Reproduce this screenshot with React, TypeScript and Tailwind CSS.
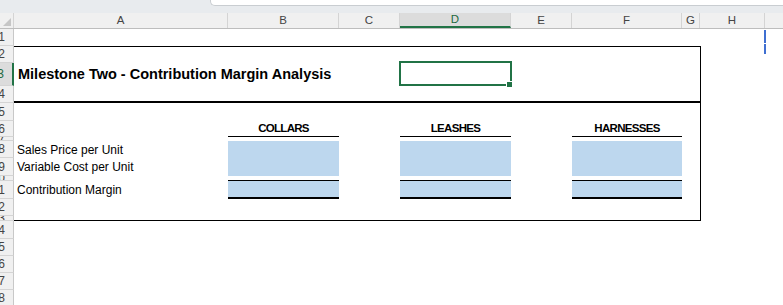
import React from 'react';

const COLS = [
  { key: 'A', cls: 'w-[214px]' },
  { key: 'B', cls: 'w-[111px]' },
  { key: 'C', cls: 'w-[61px]' },
  { key: 'D', cls: 'w-[111px]', active: true },
  { key: 'E', cls: 'w-[61px]' },
  { key: 'F', cls: 'w-[110px]' },
  { key: 'G', cls: 'w-[18px]' },
  { key: 'H', cls: 'w-[65px]' },
];

const ROWS = [
  { n: 1, h: 'h-[17px]' },
  { n: 2, h: 'h-[17px]' },
  { n: 3, h: 'h-[23px]', active: true },
  { n: 4, h: 'h-[17px]' },
  { n: 5, h: 'h-[18px]' },
  { n: 6, h: 'h-[16px]' },
  { n: 7, h: 'h-[4px]' },
  { n: 8, h: 'h-[17px]' },
  { n: 9, h: 'h-[18px]' },
  { n: 10, h: 'h-[5px]' },
  { n: 11, h: 'h-[18px]' },
  { n: 12, h: 'h-[17px]' },
  { n: 13, h: 'h-[5px]' },
  { n: 14, h: 'h-[18px]' },
  { n: 15, h: 'h-[17px]' },
  { n: 16, h: 'h-[17px]' },
  { n: 17, h: 'h-[17px]' },
  { n: 18, h: 'h-[17px]' },
];

const PRODUCTS = ['COLLARS', 'LEASHES', 'HARNESSES'];

const ProductColumn = ({ name, cls }: { name: string; cls: string }) => (
  <div className={`${cls} flex flex-col`}>
    <div className="h-[18px]" />
    <div className="h-[16px] border-b border-black flex items-center justify-center text-[11.5px] font-bold tracking-[-0.7px] text-black leading-none">
      {name}
    </div>
    <div className="h-[4px]" />
    <div className="h-[35px] bg-[#bdd7ee]" />
    <div className="h-[4px]" />
    <div className="h-[19px] border-t border-b-2 border-black bg-[#bdd7ee]" />
  </div>
);

export default function App() {
  return (
    <div className="w-[783px] h-[305px] overflow-hidden bg-white font-['Liberation_Sans',_Arial,_sans-serif] text-black">
      {/* ribbon edge */}
      <div className="h-[13px] bg-[#e8ebee] flex">
        <div className="w-[210px]" />
        <div className="flex-1 h-[6px] bg-white border-b border-l border-[#c9cdd1] rounded-bl-[5px]" />
      </div>

      {/* column headers */}
      <div className="h-[16px] flex bg-[#f0f0f0] border-b border-[#bdbdbd] text-[11.5px] text-[#444] leading-none">
        <div className="w-[14px] border-r border-[#d4d4d4] flex items-end justify-end p-[2px]">
          <svg width="8" height="8" viewBox="0 0 8 8">
            <polygon points="8,0 8,8 0,8" fill="#c6c6c6" />
          </svg>
        </div>
        {COLS.map((c) => (
          <div
            key={c.key}
            className={`${c.cls} border-r border-[#d4d4d4] flex items-center justify-center ${
              c.active ? 'bg-[#dcdcdc] text-[#1e6b41] border-b-2 border-b-[#217346]' : ''
            }`}
          >
            {c.key}
          </div>
        ))}
        <div className="flex-1" />
      </div>

      <div className="flex">
        {/* row headers */}
        <div className="w-[14px] flex flex-col bg-[#f0f0f0] text-[12px] text-[#444] leading-none">
          {ROWS.map((r) => (
            <div
              key={r.n}
              className={`${r.h} border-b border-[#d4d4d4] flex items-center justify-end pr-[8px] overflow-hidden whitespace-nowrap ${
                r.active ? 'bg-[#dcdcdc] text-[#1e6b41] border-r-2 border-r-[#217346]' : 'border-r border-r-[#c8c8c8]'
              }`}
            >
              {r.n}
            </div>
          ))}
        </div>

        {/* sheet */}
        <div className="flex-1 relative">
          <div className="h-[17px]" />
          <div className="w-[687px] h-[175px] border-t border-r border-b border-black flex flex-col">
            <div className="h-[56px] border-b-2 border-black flex flex-col">
              <div className="h-[16px]" />
              <div className="h-[23px] flex items-center pl-[4px] text-[14.5px] font-bold leading-none">
                Milestone Two - Contribution Margin Analysis
              </div>
            </div>
            <div className="flex h-[117px]">
              <div className="w-[214px] flex flex-col pl-[3px] text-[12px] leading-none">
                <div className="h-[18px]" />
                <div className="h-[16px]" />
                <div className="h-[4px]" />
                <div className="h-[17px] flex items-center">Sales Price per Unit</div>
                <div className="h-[18px] flex items-center">Variable Cost per Unit</div>
                <div className="h-[5px]" />
                <div className="h-[18px] flex items-center">Contribution Margin</div>
              </div>
              <ProductColumn name={PRODUCTS[0]} cls="w-[111px]" />
              <div className="w-[61px]" />
              <ProductColumn name={PRODUCTS[1]} cls="w-[111px]" />
              <div className="w-[61px]" />
              <ProductColumn name={PRODUCTS[2]} cls="w-[110px]" />
            </div>
          </div>

          {/* active cell D3 */}
          <div className="absolute left-[385px] top-[32px] w-[113px] h-[25px] border-2 border-[#217346]" />
          <div className="absolute left-[492px] top-[52px] w-[7px] h-[7px] bg-[#217346] border border-white" />

          {/* split marker */}
          <div className="absolute left-[750px] top-[1px] w-[2px] h-[13px] bg-[#3f6fd1]" />
          <div className="absolute left-[750px] top-[15px] w-[2px] h-[10px] bg-[#3f6fd1]" />
        </div>
      </div>
    </div>
  );
}
